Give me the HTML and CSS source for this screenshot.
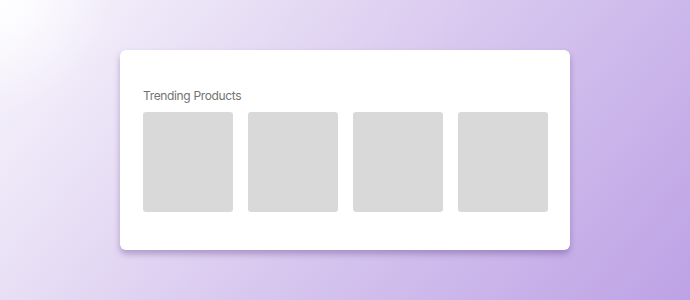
FILE: index.html
```html
<!DOCTYPE html>
<html>
<head>
<meta charset="utf-8">
<link rel="stylesheet" href="styles.css">
</head>
<body>
<div class="stage">
  <section class="card">
    <h2 class="title">Trending Products</h2>
    <div class="tiles">
      <div class="tile"></div>
      <div class="tile"></div>
      <div class="tile"></div>
      <div class="tile"></div>
    </div>
  </section>
</div>
</body>
</html>
```

FILE: styles.css
```css
html, body {
  margin: 0;
  padding: 0;
  width: 690px;
  height: 300px;
  overflow: hidden;
}
.stage {
  width: 690px;
  height: 300px;
  display: flex;
  align-items: flex-start;
  justify-content: center;
  padding-top: 50px;
  box-sizing: border-box;
  background:
    radial-gradient(circle at 0 0, rgba(255, 255, 255, 0.9) 0, rgba(255, 255, 255, 0) 110px),
    linear-gradient(130deg, #f8f6fd 0%, #e6dcf4 30%, #d8c8ef 52%, #bda2e5 100%);
}
.card {
  width: 450px;
  height: 200px;
  box-sizing: border-box;
  background: #ffffff;
  border-radius: 6px;
  padding: 38px 22px 0 23px;
  box-shadow: 0 4px 6px rgba(80, 50, 120, 0.35);
}
.title {
  margin: 0 0 8px 0;
  font-family: Inter, "Noto Sans", sans-serif;
  font-weight: 400;
  font-size: 12px;
  letter-spacing: -0.35px;
  line-height: 16px;
  color: #737373;
}
.tiles {
  display: flex;
  gap: 15px;
}
.tile {
  width: 90px;
  height: 100px;
  background: #d9d9d9;
  border-radius: 3px;
}
```
